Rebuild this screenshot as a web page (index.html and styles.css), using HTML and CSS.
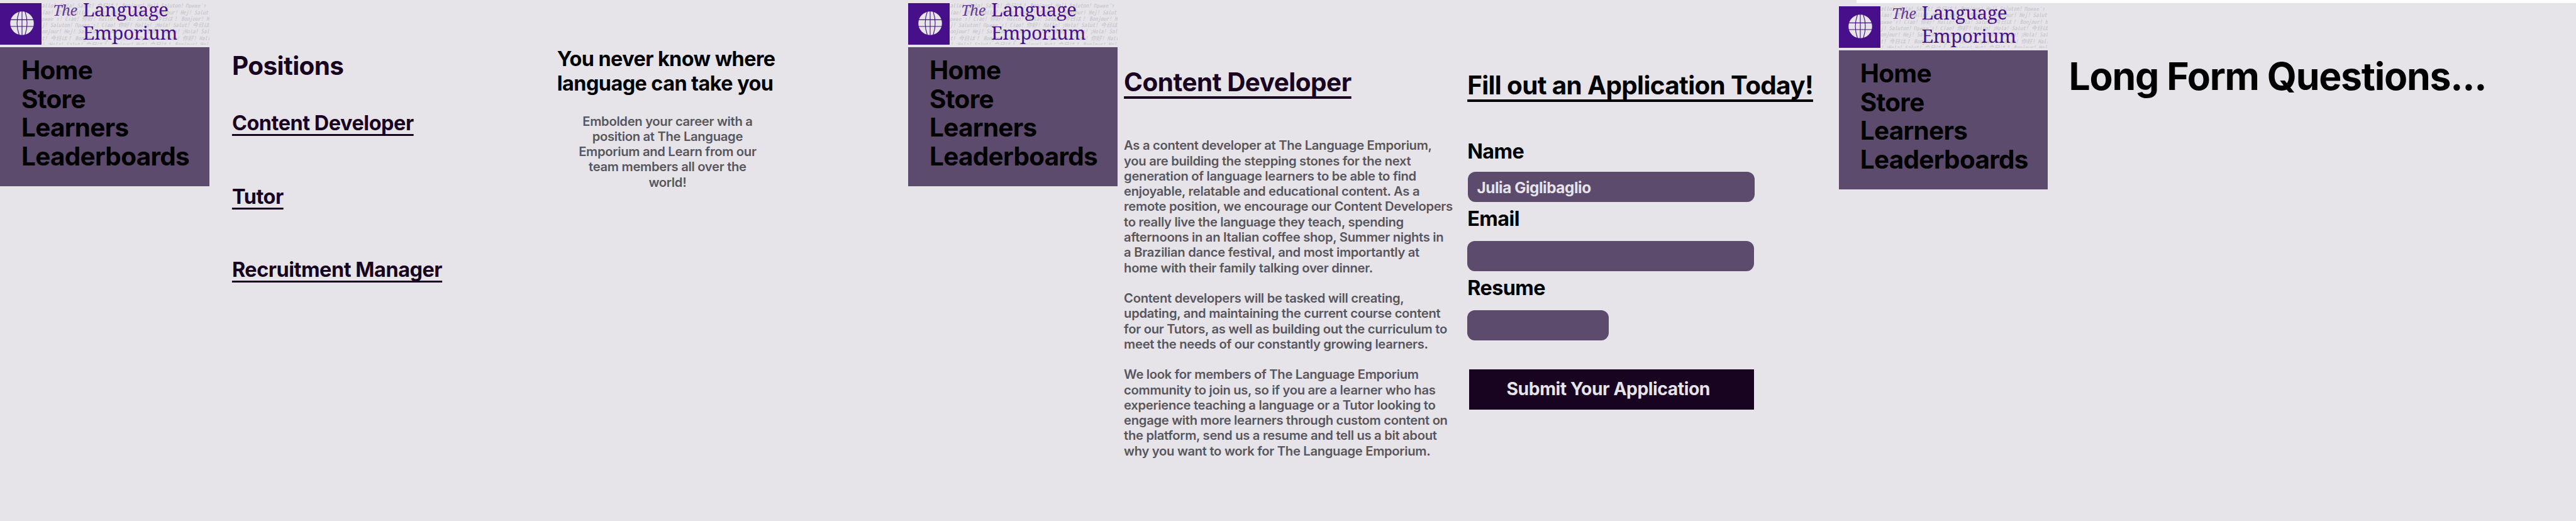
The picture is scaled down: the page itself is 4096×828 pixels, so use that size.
FILE: index.html
```
<!DOCTYPE html>
<html lang="en">
<head>
<meta charset="utf-8">
<title>The Language Emporium</title>
<link rel="stylesheet" href="styles.css">
</head>
<body>
<svg class="defs" aria-hidden="true">
  <symbol id="globe" viewBox="0 0 47 47">
    <circle cx="23.5" cy="23.500" r="23.2" fill="#e6e4e9"/>
    <g fill="none" stroke="#470f8a" stroke-width="1.4">
      <path d="M23.500 0V47M0 16.600H47M0 29.600H47"/>
      <path d="M18 0Q9.500 23.500 18 47M29.300 0Q37.500 23.500 29.300 47"/>
    </g>
  </symbol>
</svg>
<main class="boards">
  <section class="board board-positions">
    <aside class="side">
      <header class="logo">
        <div class="mark"><svg><use href="#globe"/></svg></div>
        <div class="banner">
          <div class="greetings"><p>allo! ¡Hola! Salut! 今日は！ Bonjour! Hej! Saluton! <i>Приве́т</i></p><p>iao! 你好! Hallo! ¡Hola! Salut! 今日は！ Bonjour! Hej! Salut</p><p><i>риве́т</i>! Ciao! 你好! Hallo! ¡Hola! Salut! 今日は！ Bonjour! H</p><p>j! Saluton! <i>Приве́т</i>! Ciao! 你好! Hallo! ¡Hola! Salut! 今日は</p><p>onjour! Hej! Saluton! <i>Приве́т</i>! Ciao! 你好! Hallo! ¡Hola! Sal</p><p>t! 今日は！ Bonjour! Hej! Saluton! <i>Приве́т</i>! Ciao! 你好! Hall</p><p>! ¡Hola! Salut! 今日は！ Bonjour! Hut! 今日は！ Bonjour! Hej</p></div>
          <div class="brand"><em>The</em><strong>Language<br>Emporium</strong></div>
        </div>
      </header>
      <nav class="menu"><a>Home</a><a>Store</a><a>Learners</a><a>Leaderboards</a></nav>
    </aside>
    <div class="positions">
      <h1 class="t50">Positions</h1>
      <a class="t40 link">Content Developer</a>
      <a class="t40 link">Tutor</a>
      <a class="t40 link">Recruitment Manager</a>
    </div>
    <div class="pitch">
      <h2 class="t40">You never know where<br>language can take you</h2>
      <p class="body">Embolden your career with a<br>position at The Language<br>Emporium and Learn from our<br>team members all over the<br>world!</p>
    </div>
  </section>

  <section class="board board-apply">
    <aside class="side">
      <header class="logo">
        <div class="mark"><svg><use href="#globe"/></svg></div>
        <div class="banner">
          <div class="greetings"><p>allo! ¡Hola! Salut! 今日は！ Bonjour! Hej! Saluton! <i>Приве́т</i></p><p>iao! 你好! Hallo! ¡Hola! Salut! 今日は！ Bonjour! Hej! Salut</p><p><i>риве́т</i>! Ciao! 你好! Hallo! ¡Hola! Salut! 今日は！ Bonjour! H</p><p>j! Saluton! <i>Приве́т</i>! Ciao! 你好! Hallo! ¡Hola! Salut! 今日は</p><p>onjour! Hej! Saluton! <i>Приве́т</i>! Ciao! 你好! Hallo! ¡Hola! Sal</p><p>t! 今日は！ Bonjour! Hej! Saluton! <i>Приве́т</i>! Ciao! 你好! Hall</p><p>! ¡Hola! Salut! 今日は！ Bonjour! Hut! 今日は！ Bonjour! Hej</p></div>
          <div class="brand"><em>The</em><strong>Language<br>Emporium</strong></div>
        </div>
      </header>
      <nav class="menu"><a>Home</a><a>Store</a><a>Learners</a><a>Leaderboards</a></nav>
    </aside>
    <article class="job">
      <h1 class="t50 link">Content Developer</h1>
      <p class="body">As a content developer at The Language Emporium,<br>you are building the stepping stones for the next<br>generation of language learners to be able to find<br>enjoyable, relatable and educational content. As a<br>remote position, we encourage our Content Developers<br>to really live the language they teach, spending<br>afternoons in an Italian coffee shop, Summer nights in<br>a Brazilian dance festival, and most importantly at<br>home with their family talking over dinner.</p>
      <p class="body">Content developers will be tasked will creating,<br>updating, and maintaining the current course content<br>for our Tutors, as well as building out the curriculum to<br>meet the needs of our constantly growing learners.</p>
      <p class="body">We look for members of The Language Emporium<br>community to join us, so if you are a learner who has<br>experience teaching a language or a Tutor looking to<br>engage with more learners through custom content on<br>the platform, send us a resume and tell us a bit about<br>why you want to work for The Language Emporium.</p>
    </article>
    <form class="apply">
      <h1 class="t50 link">Fill out an Application Today!</h1>
      <label class="t40">Name</label>
      <div class="field field-name">Julia Giglibaglio</div>
      <label class="t40">Email</label>
      <div class="field field-email"></div>
      <label class="t40">Resume</label>
      <div class="field field-resume"></div>
      <button type="button" class="submit">Submit Your Application</button>
    </form>
  </section>

  <section class="board board-long">
    <aside class="side">
      <header class="logo">
        <div class="mark"><svg><use href="#globe"/></svg></div>
        <div class="banner">
          <div class="greetings"><p>allo! ¡Hola! Salut! 今日は！ Bonjour! Hej! Saluton! <i>Приве́т</i></p><p>iao! 你好! Hallo! ¡Hola! Salut! 今日は！ Bonjour! Hej! Salut</p><p><i>риве́т</i>! Ciao! 你好! Hallo! ¡Hola! Salut! 今日は！ Bonjour! H</p><p>j! Saluton! <i>Приве́т</i>! Ciao! 你好! Hallo! ¡Hola! Salut! 今日は</p><p>onjour! Hej! Saluton! <i>Приве́т</i>! Ciao! 你好! Hallo! ¡Hola! Sal</p><p>t! 今日は！ Bonjour! Hej! Saluton! <i>Приве́т</i>! Ciao! 你好! Hall</p><p>! ¡Hola! Salut! 今日は！ Bonjour! Hut! 今日は！ Bonjour! Hej</p></div>
          <div class="brand"><em>The</em><strong>Language<br>Emporium</strong></div>
        </div>
      </header>
      <nav class="menu"><a>Home</a><a>Store</a><a>Learners</a><a>Leaderboards</a></nav>
    </aside>
    <h1 class="long-title">Long Form Questions...</h1>
  </section>
</main>
</body>
</html>
```
FILE: styles.css
```
/* 1rem = 10 design units */
html { font-size: 8.0901px; }
* { box-sizing: border-box; margin: 0; padding: 0; }
body {
  width: 4096px;
  height: 828px;
  overflow: hidden;
  background: #e6e4e9;
  color: #000;
  font-family: Inter, "Liberation Sans", sans-serif;
}
.defs { position: absolute; width: 0; height: 0; }
.boards { display: flex; height: 828px; }
.board { display: flex; align-items: flex-start; flex: none; height: 100%; }
.board-positions { width: 178.5rem; }
.board-apply { width: 182.9rem; }
.board-long { width: 144.9rem; background: linear-gradient(#fff, #fff) 3.5rem 0 / 100% .6rem no-repeat; }

.side { flex: none; width: 41.1rem; padding-top: .6rem; }
.board-long .side { padding-top: 1.2rem; }
.logo { display: flex; height: 8.2rem; margin-bottom: .5rem; }
.mark {
  flex: none;
  width: 8.2rem;
  background: #470f8a;
  padding: 1.67rem 0 0 1.93rem;
}
.mark svg { display: block; width: 4.7rem; height: 4.7rem; }
.banner { position: relative; flex: 1; overflow: hidden; }
.greetings {
  height: 100%;
  margin-top: -.08rem;
  color: #c4c2c8;
  font: italic 1.1rem/1.275rem "Noto Sans Mono CJK JP", "Noto Sans CJK JP", monospace;
  white-space: nowrap;
}
.greetings p { height: 1.275rem; }
.greetings i { font: italic .96rem/1 "DejaVu Sans Mono", monospace; }
.brand {
  position: absolute;
  inset: -.93rem 0 0 2.2rem;
  display: flex;
  color: #470f8a;
  font-family: "Noto Serif", "Liberation Serif", serif;
  white-space: nowrap;
}
.brand em { width: 5.9rem; font-size: 2.9rem; line-height: 4.75rem; letter-spacing: -.02em; opacity: .8; }
.brand strong { font-weight: 400; font-size: 3.68rem; line-height: 4.5rem; letter-spacing: -.01em; }
.menu {
  display: flex;
  flex-direction: column;
  height: 27.3rem;
  padding: 1.72rem 0 0 4.2rem;
  background: #5d4b6e;
  font-size: 5rem;
  font-weight: 700;
  line-height: 5.63rem;
  letter-spacing: -.017em;
}

.t50, .t40, .long-title { font-weight: 700; letter-spacing: -.017em; white-space: nowrap; }
.t50 { font-size: 5rem; line-height: 6rem; }
.t40 { font-size: 4rem; line-height: 4.8rem; }
.link {
  text-decoration: underline;
  text-decoration-thickness: .1em;
  text-decoration-skip-ink: none;
  text-underline-offset: .19em;
}
.body {
  color: #58565c;
  font-size: 2.5rem;
  font-weight: 600;
  line-height: 3rem;
  letter-spacing: -.0155em;
  white-space: nowrap;
}

.positions {
  display: flex;
  flex-direction: column;
  align-items: flex-start;
  width: 64rem;
  padding: 10.03rem 0 0 4.5rem;
  color: #180320;
}
.positions .t50 { margin-bottom: 5.88rem; letter-spacing: -.014em; }
.positions .t40 { margin-bottom: 9.6rem; letter-spacing: -.0132em; }
.pitch { padding-top: 9.29rem; margin-left: 4.4rem; }
.pitch .body { width: 43.4rem; margin-top: 3.44rem; text-align: center; }

.job { flex: none; width: 67.5rem; padding: 13.22rem 0 0 1.3rem; }
.job .t50 { color: #180320; margin-bottom: 7.9rem; letter-spacing: -.0121em; }
.job .body + .body { margin-top: 3rem; }

.apply { display: flex; flex-direction: column; align-items: flex-start; padding: 13.82rem 0 0 1.3rem; }
.apply .t50 { margin-bottom: 7.67rem; letter-spacing: -.0165em; }
.field {
  width: 56.4rem;
  height: 6rem;
  border-radius: 1.5rem;
  background: #5d4b6e;
  color: #e6e4e9;
  font-size: 3rem;
  font-weight: 700;
  line-height: 6.4rem;
  letter-spacing: -.018em;
}
.field-name { margin: 1.41rem 0 .98rem .1rem; padding-left: 1.8rem; }
.field-email { margin: 1.82rem 0 .98rem; }
.field-resume { width: 27.8rem; margin-top: 1.82rem; }
.submit {
  width: 56.1rem;
  height: 7.9rem;
  margin: 5.7rem 0 0 .3rem;
  padding: 0 1.3rem .24rem 0;
  border: 0;
  background: #180320;
  color: #e6e4e9;
  font: 700 3.5rem/5rem Inter, "Liberation Sans", sans-serif;
  letter-spacing: -.016em;
}
.long-title { padding: 10.5rem 0 0 4.1rem; font-size: 7.5rem; line-height: 9rem; letter-spacing: -.0205em; }
```
